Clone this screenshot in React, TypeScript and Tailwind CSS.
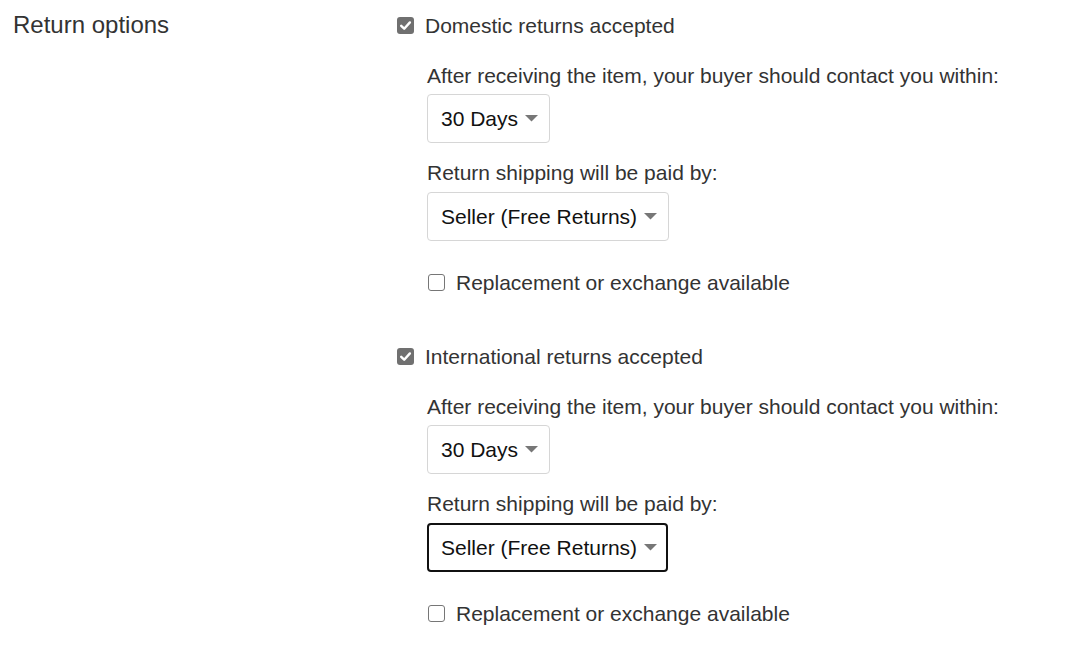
const font = { fontFamily: '"Liberation Sans", Arial, sans-serif' }

function Checked() {
  return (
    <span className="flex h-[17px] w-[17px] shrink-0 items-center justify-center rounded-[3px] bg-[#707070]">
      <svg width="13" height="13" viewBox="0 0 13 13" fill="none">
        <path d="M2.2 6.8 L5.2 9.7 L10.9 3.4" stroke="#fff" strokeWidth="2.4" strokeLinecap="round" strokeLinejoin="round" />
      </svg>
    </span>
  )
}

function Unchecked() {
  return <span className="block h-[17px] w-[17px] shrink-0 rounded-[3px] border-[1.5px] border-[#767676] bg-white" />
}

function Select({ label, focused }: { label: string; focused?: boolean }) {
  return (
    <div
      className={`inline-flex h-[49px] items-center gap-[7px] rounded-[4px] bg-white text-[21px] text-[#111] ${
        focused ? 'border-2 border-[#111] pl-[12px] pr-[9px]' : 'border border-[#d6d6d6] pl-[13px] pr-[11px]'
      }`}
    >
      <span>{label}</span>
      <svg width="13" height="7" viewBox="0 0 13 7">
        <path d="M0 0 H13 L6.5 6.5 Z" fill="#777" />
      </svg>
    </div>
  )
}

function Section({ title, focusLast }: { title: string; focusLast?: boolean }) {
  return (
    <div>
      <div className="flex h-[50px] items-center gap-[11px]">
        <Checked />
        <span>{title}</span>
      </div>
      <div className="pl-[30px]">
        <div className="flex h-[44px] items-center pt-[6px]">After receiving the item, your buyer should contact you within:</div>
        <Select label="30 Days" />
        <div className="flex h-[49px] items-center pt-[10px]">Return shipping will be paid by:</div>
        <Select label="Seller (Free Returns)" focused={focusLast} />
        <div className="mt-[16px] flex h-[50px] items-center gap-[11px] pl-[1px]">
          <Unchecked />
          <span>Replacement or exchange available</span>
        </div>
      </div>
    </div>
  )
}

export default function App() {
  return (
    <div className="flex h-[649px] w-[1077px] bg-white text-[21px] leading-none text-[#333]" style={font}>
      <div className="w-[397px] shrink-0 pl-[13px]">
        <div className="flex h-[50px] items-center text-[24px] text-[#333]">Return options</div>
      </div>
      <div className="flex flex-col gap-[24px]">
        <Section title="Domestic returns accepted" />
        <Section title="International returns accepted" focusLast />
      </div>
    </div>
  )
}
